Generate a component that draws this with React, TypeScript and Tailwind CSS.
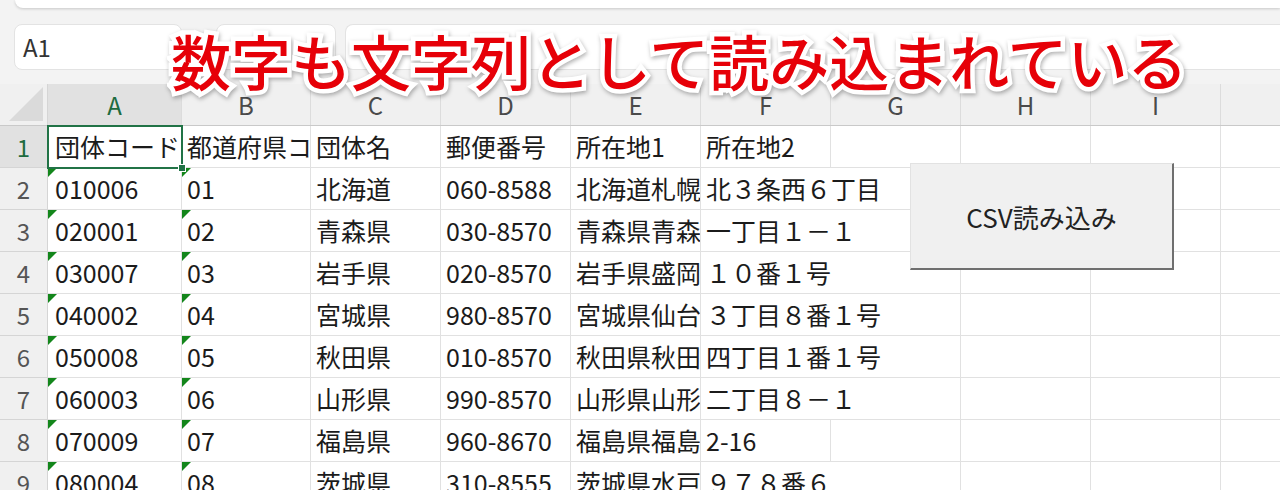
import type { ReactNode } from 'react';

const FONT = '"Noto Sans CJK JP", "Noto Sans", sans-serif';

const colWidths = [134, 129, 130, 130, 130, 130, 130, 130, 130, 70];
const colLetters = ['A', 'B', 'C', 'D', 'E', 'F', 'G', 'H', 'I', ''];

interface RowData {
  cells: string[];
  flagged: boolean;
  overflowF: boolean;
}

const rows: RowData[] = [
  { cells: ['団体コード', '都道府県コード', '団体名', '郵便番号', '所在地1', '所在地2'], flagged: false, overflowF: false },
  { cells: ['010006', '01', '北海道', '060-8588', '北海道札幌市', '北３条西６丁目'], flagged: true, overflowF: true },
  { cells: ['020001', '02', '青森県', '030-8570', '青森県青森市', '一丁目１－１'], flagged: true, overflowF: true },
  { cells: ['030007', '03', '岩手県', '020-8570', '岩手県盛岡市', '１０番１号'], flagged: true, overflowF: true },
  { cells: ['040002', '04', '宮城県', '980-8570', '宮城県仙台市', '３丁目８番１号'], flagged: true, overflowF: true },
  { cells: ['050008', '05', '秋田県', '010-8570', '秋田県秋田市', '四丁目１番１号'], flagged: true, overflowF: true },
  { cells: ['060003', '06', '山形県', '990-8570', '山形県山形市', '二丁目８－１'], flagged: true, overflowF: true },
  { cells: ['070009', '07', '福島県', '960-8670', '福島県福島市', '2-16'], flagged: true, overflowF: false },
  { cells: ['080004', '08', '茨城県', '310-8555', '茨城県水戸市', '９７８番６'], flagged: true, overflowF: true },
];

function ErrorMark() {
  return (
    <svg className="absolute left-0 top-0" width="9" height="9" viewBox="0 0 9 9">
      <polygon points="0,0 9,0 0,9" fill="#13861b" />
    </svg>
  );
}

function Cell({ width, children, flag, noRight, overflow, first }: { width: number; children?: ReactNode; flag?: boolean; noRight?: boolean; overflow?: boolean; first?: boolean }) {
  return (
    <div
      className={`relative h-full shrink-0 flex items-center whitespace-nowrap border-b border-[#e1e1e1] ${first ? 'pl-[7px]' : 'pl-[5px]'} ${noRight ? '' : 'border-r'} ${overflow ? 'overflow-visible' : 'overflow-hidden'}`}
      style={{ width }}
    >
      {flag && <ErrorMark />}
      <span className="relative text-[25px] leading-none text-[#1b1b1b]">{children}</span>
    </div>
  );
}

export default function App() {
  return (
    <div className="relative w-[1280px] h-[490px] overflow-hidden bg-[#f3f3f3] flex flex-col" style={{ fontFamily: FONT }}>
      {/* ribbon edge */}
      <div className="shrink-0 h-[8px] ml-[15px] bg-white rounded-bl-[12px] shadow-[0_1px_3px_rgba(0,0,0,0.18)]" />

      {/* formula bar */}
      <div className="shrink-0 mt-[16px] h-[46px] flex items-stretch">
        <div className="ml-[14px] w-[168px] bg-white rounded-[8px] border border-[#e3e3e3] flex items-center pl-[8px] text-[24px] text-[#333]">
          A1
        </div>
        <div className="ml-[34px] w-[120px] bg-white rounded-[8px] border border-[#e3e3e3] flex items-center justify-around px-2 text-[18px] text-[#777]">
          <span>✕</span>
          <span>✓</span>
          <span className="italic">fx</span>
        </div>
        <div className="ml-[9px] flex-1 bg-white rounded-l-[8px] border border-r-0 border-[#e3e3e3]" />
      </div>

      {/* grid */}
      <div className="relative shrink-0 mt-[14px] bg-white">
        {/* column header row */}
        <div className="flex h-[42px] bg-[#f0f0f0] border-b border-[#c9c9c9]">
          <div className="w-[48px] shrink-0 h-full relative border-r border-[#d5d5d5]">
            <svg className="absolute right-[4px] bottom-[4px]" width="34" height="34" viewBox="0 0 34 34">
              <polygon points="0,34 34,0 34,34" fill="#dadada" />
            </svg>
          </div>
          {colWidths.map((w, i) => (
            <div
              key={i}
              className={`h-full shrink-0 flex items-center justify-center text-[24px] border-r border-[#dcdcdc] ${i === 0 ? 'bg-[#e1e1e1] text-[#1d6b3f]' : 'text-[#4a4a4a]'}`}
              style={{ width: w }}
            >
              {colLetters[i]}
            </div>
          ))}
        </div>

        {/* data rows */}
        {rows.map((row, r) => (
          <div key={r} className="flex h-[42px]">
            <div
              className={`w-[48px] shrink-0 h-full flex items-center justify-center text-[24px] border-r border-b border-[#d5d5d5] ${r === 0 ? 'bg-[#e1e1e1] text-[#1d6b3f]' : 'bg-[#f0f0f0] text-[#555]'}`}
            >
              {r + 1}
            </div>
            {colWidths.map((w, c) => (
              <Cell
                key={c}
                width={w}
                first={c === 0}
                flag={row.flagged && c < 2}
                noRight={c === 5 && row.overflowF}
                overflow={c === 5}
              >
                {row.cells[c]}
              </Cell>
            ))}
          </div>
        ))}

        {/* active cell A1 */}
        <div className="absolute left-[47px] top-[41px] w-[136px] h-[44px] border-2 border-[#217346]">
          <div className="absolute right-[-5px] bottom-[-5px] w-[8px] h-[8px] bg-[#217346] border border-white" />
        </div>

        {/* CSV button */}
        <div className="absolute left-[910px] top-[79px] w-[264px] h-[107px] bg-[#f0f0f0] border-t border-l border-[#e2e2e2] border-r-2 border-b-2 border-r-[#6f6f6f] border-b-[#6f6f6f] flex items-center justify-center text-[26px] text-[#222]">
          CSV読み込み
        </div>
      </div>

      {/* caption overlay */}
      <div className="absolute left-[171px] top-[30px] text-[60px] leading-none font-medium text-[#e60008] whitespace-nowrap [-webkit-text-stroke:9px_white] [paint-order:stroke_fill] drop-shadow-[1px_2px_2px_rgba(0,0,0,0.3)]">
        数字も文字列として読み込まれている
      </div>
    </div>
  );
}
